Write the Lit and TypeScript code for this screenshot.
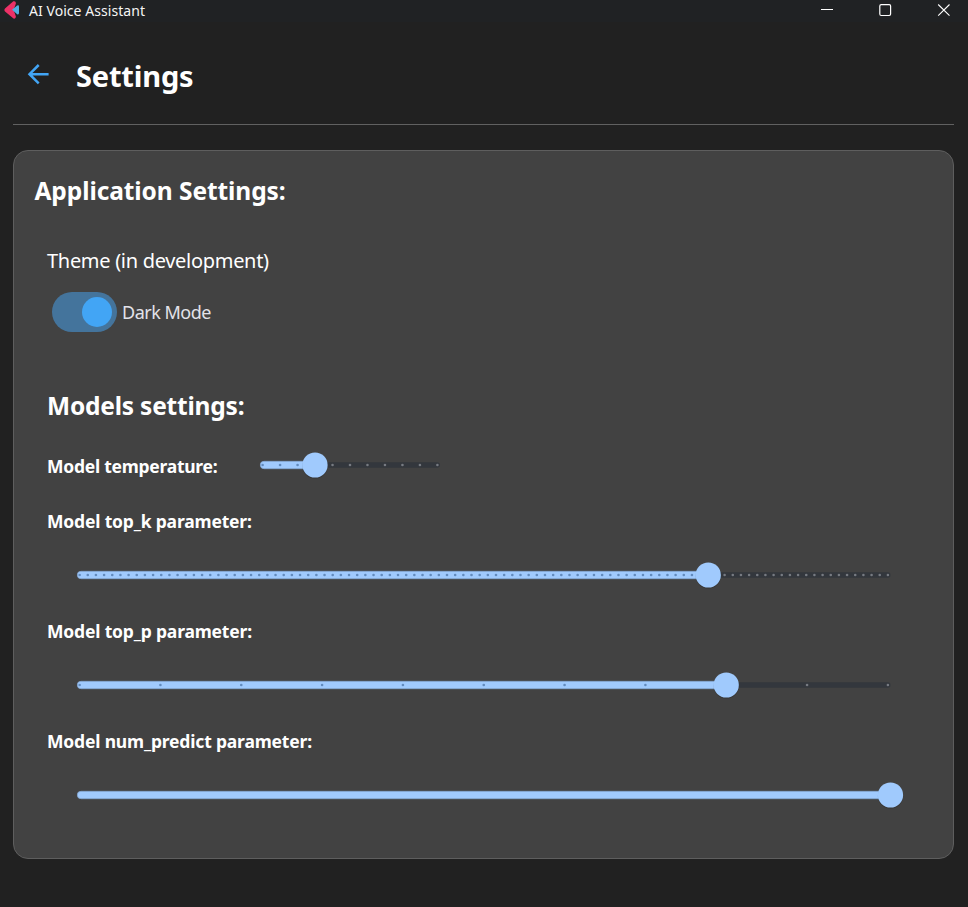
import { LitElement, html, svg, css } from "lit";
import { customElement, property } from "lit/decorators.js";

/** Slider with optional tick marks; x values are relative to the track's left end. */
@customElement("tick-slider")
class TickSlider extends LitElement {
  @property({ type: Number }) length = 180;
  @property({ type: Number }) divisions = 0;
  @property({ type: Number }) value = 0;

  static styles = css`
    :host { display: block; height: 30px; }
    svg { display: block; overflow: visible; }
    .rail { fill: #33373d; }
    .fill { fill: #a0cafd; stroke: #83a6d2; stroke-width: 0.7; }
    .thumb { fill: #a0cafd; }
    .shade { fill: #000; opacity: 0.16; }
    .on { fill: #628bbd; }
    .off { fill: #777b82; }
  `;

  render() {
    const inset = this.divisions ? 2.6 : 0;
    const span = this.length - inset * 2;
    const n = this.divisions || 1;
    const at = (i: number) => inset + (span * i) / n;
    const x = this.divisions ? at(this.value) : this.length;
    const ticks = this.divisions ? Array.from({ length: n + 1 }, (_, i) => i) : [];
    return html`<svg width=${this.length} height="30">
      <rect class="rail" x="1" y="12.3" width=${this.length - 1} height="5.4" rx="2.7"></rect>
      <rect class="fill" x="0.3" y="11.3" width=${x} height="7.4" rx="3.7"></rect>
      ${ticks.map((i) => svg`<circle class=${i <= this.value ? "on" : "off"} cx=${at(i)} cy="15" r="1.3"></circle>`)}
      <circle class="shade" cx=${x} cy="15.9" r="12.7"></circle>
      <circle class="thumb" cx=${x} cy="15" r="12.6"></circle>
    </svg>`;
  }
}

@customElement("app-root")
class AppRoot extends LitElement {
  static styles = css`
    :host {
      display: flex; flex-direction: column; box-sizing: border-box;
      width: 968px; height: 907px; background: #212121; color: #fff;
      font-family: "Noto Sans", "Open Sans", sans-serif; overflow: hidden; white-space: nowrap;
    }
    svg { display: block; flex: none; }
    .titlebar { display: flex; height: 22px; background: #202224; padding-left: 4px; }
    .title { margin-left: 6px; font-size: 14px; line-height: 21px; letter-spacing: 0.05px; color: #f5f5f5; flex: 1; }
    .controls { display: flex; gap: 45px; padding: 4px 18px 0 0; }
    .maximize { margin-left: 1px; }
    .header { display: flex; height: 102px; }
    .back { margin: 42px 0 0 27px; }
    h1, h2, p { margin: 0; }
    h1 { font-size: 29px; line-height: 40px; margin: 34px 0 0 27px; letter-spacing: -0.18px; }
    .divider { height: 1px; background: #616161; margin: 0 14px 0 13px; }
    .panel {
      box-sizing: border-box; margin: 25px 14px 0 13px; height: 709px; background: #424242;
      border: 1px solid #5e5e5e; border-radius: 15px; padding: 22px 0 0 33px;
    }
    h2 { font-size: 24.5px; line-height: 36px; letter-spacing: -0.08px; }
    .app { margin-left: -12.5px; }
    .theme { font-size: 20px; line-height: 30px; margin-top: 37px; letter-spacing: -0.3px; }
    .switchrow { display: flex; align-items: center; gap: 5px; margin: 16px 0 0 5px; height: 40px; }
    .switch { display: flex; justify-content: flex-end; align-items: center; width: 65px; height: 40px; padding-right: 5px; box-sizing: border-box; border-radius: 20px; background: #44749c; }
    .knob { width: 30px; height: 30px; border-radius: 50%; background: #42a5f5; }
    .mode { font-size: 18px; line-height: 26px; color: #e2e2e9; letter-spacing: -0.5px; }
    .models { margin: 56px 0 26px; letter-spacing: -0.2px; }
    .row { display: flex; height: 30px; }
    .label { font-size: 17.5px; font-weight: 700; line-height: 30px; letter-spacing: -0.18px; }
    .temp { width: 213px; line-height: 32px; letter-spacing: -0.26px; }
    .group { margin-top: 26px; height: 84px; }
    .group tick-slider { margin: 24px 0 0 30px; }
  `;

  render() {
    const params = [
      { label: "Model top_k parameter:", divisions: 99, value: 77 },
      { label: "Model top_p parameter:", divisions: 10, value: 8 },
      { label: "Model num_predict parameter:", divisions: 0, value: 1 },
    ];
    return html`
      <div class="titlebar">
        <svg width="19" height="20" viewBox="0 0 19 20">
          <path d="M9.3 1.3Q12 .6 11.9 3.4L9.6 10L11.9 16.4Q12 19.2 9.5 18.6L1 11.6Q-.2 10 1 8.6Z" fill="#ec3167"></path>
          <path d="M8 9.8L13.2 5.4Q15 4.6 15 6.5V13Q14.9 14.9 13.2 14.2Z" fill="#51aee0"></path>
        </svg>
        <div class="title">AI Voice Assistant</div>
        <div class="controls">
          <svg width="12" height="12" fill="none" stroke="#fff"><path d="M0 5.5H12"></path></svg>
          <svg class="maximize" width="13" height="13" fill="none" stroke="#fff" stroke-width="1.2"><rect x=".8" y=".7" width="10.8" height="10.8" rx="1.4"></rect></svg>
          <svg width="13" height="13" fill="none" stroke="#fff" stroke-width="1.1"><path d="M1.2 .5L12.5 11.7M12.5 .5L1.2 11.7"></path></svg>
        </div>
      </div>
      <div class="header">
        <svg class="back" width="22" height="21" fill="none" stroke="#42a5f5" stroke-width="2.5"><path d="M21.6 10.2H2.6M11.7 1L2.5 10.2L11.7 19.4"></path></svg>
        <h1>Settings</h1>
      </div>
      <div class="divider"></div>
      <div class="panel">
        <h2 class="app">Application Settings:</h2>
        <p class="theme">Theme (in development)</p>
        <div class="switchrow"><div class="switch"><div class="knob"></div></div><span class="mode">Dark Mode</span></div>
        <h2 class="models">Models settings:</h2>
        <div class="row"><div class="label temp">Model temperature:</div><tick-slider .length=${180} .divisions=${10} .value=${3}></tick-slider></div>
        ${params.map((p) => html`<div class="group">
          <div class="label">${p.label}</div>
          <tick-slider .length=${813.5} .divisions=${p.divisions} .value=${p.value}></tick-slider>
        </div>`)}
      </div>
    `;
  }
}
